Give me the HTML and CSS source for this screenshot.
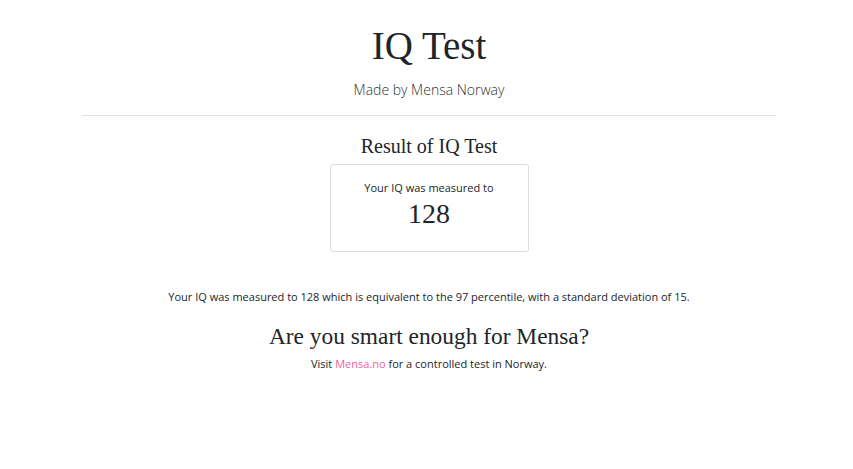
FILE: index.html
```html
<!DOCTYPE html>
<html lang="en">
<head>
<meta charset="utf-8">
<title>IQ Test</title>
<link rel="stylesheet" href="styles.css">
</head>
<body>
<div class="page">
  <header class="header">
    <h1 class="title">IQ Test</h1>
    <p class="subtitle">Made by Mensa Norway</p>
  </header>
  <hr class="divider">
  <section class="result">
    <h2 class="result-title">Result of IQ Test</h2>
    <div class="card">
      <p class="card-label">Your IQ was measured to</p>
      <p class="card-value">128</p>
    </div>
    <p class="summary">Your IQ was measured to 128 which is equivalent to the 97 percentile, with a standard deviation of 15.</p>
    <h2 class="cta-title">Are you smart enough for Mensa?</h2>
    <p class="cta-text">Visit <a class="link" href="#">Mensa.no</a> for a controlled test in Norway.</p>
  </section>
</div>
</body>
</html>
```

FILE: styles.css
```css
* { box-sizing: border-box; }
html, body { margin: 0; padding: 0; background: #fff; }
body {
  font-family: "Open Sans", "Noto Sans", sans-serif;
  color: #212529;
}
.page {
  width: 694px;
  margin-left: 82px;
  text-align: center;
}
.header { padding-top: 24px; }
.title {
  margin: 0;
  font-family: "Liberation Serif", serif;
  font-weight: 400;
  font-size: 39px;
  line-height: 44px;
}
.subtitle {
  margin: 12px 0 0;
  font-size: 14px;
  font-weight: 300;
  color: #333;
  line-height: 20px;
}
.divider {
  margin: 15px 0 0;
  border: 0;
  border-top: 1px solid #e2e2e2;
}
.result { display: flex; flex-direction: column; align-items: center; }
.result-title {
  margin: 18px 0 0;
  font-family: "Liberation Serif", serif;
  font-weight: 400;
  font-size: 20px;
  line-height: 24px;
}
.card {
  margin-top: 6px;
  width: 199px;
  height: 88px;
  border: 1px solid #dcdcdc;
  border-radius: 3px;
  padding-top: 15px;
}
.card-label {
  margin: 0;
  font-size: 11px;
  line-height: 16px;
}
.card-value {
  margin: 3px 0 0;
  font-family: "Liberation Serif", serif;
  font-size: 28px;
  line-height: 30px;
}
.summary {
  margin: 37px 0 0;
  font-size: 11px;
  line-height: 16px;
}
.cta-title {
  margin: 17px 0 0;
  font-family: "Liberation Serif", serif;
  font-weight: 400;
  font-size: 23.4px;
  line-height: 28px;
}
.cta-text {
  margin: 6px 0 0;
  font-size: 11px;
  line-height: 16px;
}
.link { color: #f0649a; text-decoration: none; }
```
